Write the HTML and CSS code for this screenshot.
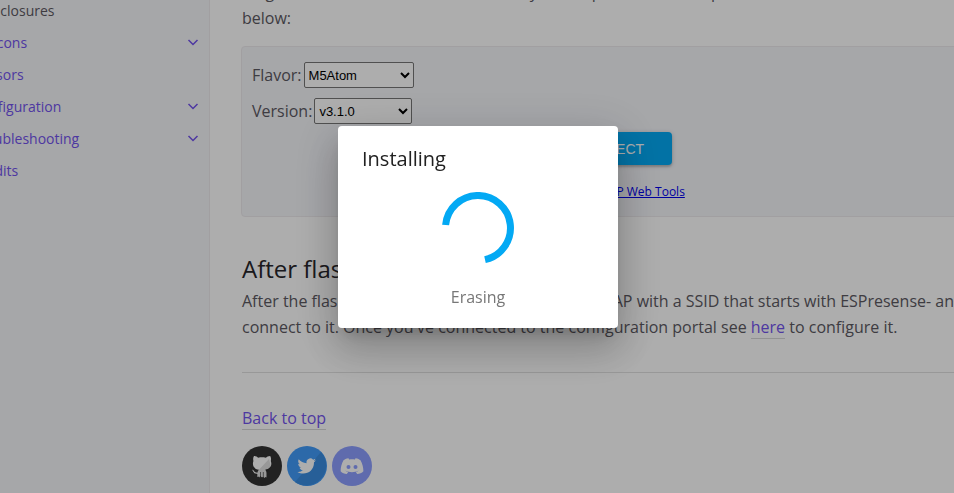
FILE: index.html
```
<!DOCTYPE html>
<html lang="en">
<head>
  <meta charset="UTF-8">
  <title>Install - ESPresense</title>
  <meta name="viewport" content="width=device-width, initial-scale=1.0">
  <link rel="stylesheet" href="styles.css">
</head>
<body>

  <div class="page">
    <nav class="sidebar">
      <ul class="nav-list">
        <li class="child"><a class="active" href="#enclosures">Enclosures</a></li>
        <li><a href="#beacons">Beacons</a>
          <svg class="chevron" viewBox="0 0 12 8"><path d="M1.500 1 6 5.500 10.500 1"/></svg></li>
        <li><a href="#sensors">Sensors</a></li>
        <li><a href="#configuration">Configuration</a>
          <svg class="chevron" viewBox="0 0 12 8"><path d="M1.500 1 6 5.500 10.500 1"/></svg></li>
        <li><a href="#troubleshooting">Troubleshooting</a>
          <svg class="chevron" viewBox="0 0 12 8"><path d="M1.500 1 6 5.500 10.500 1"/></svg></li>
        <li><a href="#credits">Credits</a></li>
      </ul>
    </nav>

    <main class="content" id="top">
      <p class="intro">Plug it in to USB, then select the flavor you can pick it and then press connect<br>below:</p>

      <form class="installer">
        <div class="field">
          <label for="flavor">Flavor:</label>
          <select id="flavor" class="flavor">
            <option>M5Atom</option>
          </select>
        </div>
        <div class="field">
          <label for="version">Version:</label>
          <select id="version" class="version">
            <option>v3.1.0</option>
          </select>
        </div>
        <div class="connect">
          <button type="button">CONNECT</button>
          <a href="#tools">Powered by ESP Web Tools</a>
        </div>
      </form>

      <h2>After flashing</h2>
      <p class="after">After the flash completes the board will create an AP with a SSID that starts with ESPresense- and<br>connect to it. Once you've connected to the configuration portal see <a href="#configuration">here</a> to configure it.</p>

      <hr>

      <footer>
        <a class="back" href="#top">Back to top</a>
        <div class="social">
          <a href="#github" aria-label="GitHub">
            <svg viewBox="0 0 40 40">
              <circle cx="20" cy="20" r="20" fill="#333"/>
              <path fill="#fff" d="M12 10c-1 2-1 3-.6 5-1.500 4.500.5 8 5.600 8.700-1 .8-1.300 1.800-1.400 2.800-2 .3-3-.5-3.600-1.500-.6-1-1.500-1.500-2-1.300 1.500 1.300 1.500 4.300 5.300 4.300v3l1-.5 1 1 1-1.500V26h.6v5.500l1-.8 1 .8V26h.6v5l1 1 1-1 1 .5V27c0-1-.4-2.500-1.300-3.300 5.200-.7 7.200-4.200 5.600-8.700.4-2 .4-3-.6-5-2 0-3.500 1-4.500 1.700-2.500-.6-5-.6-7.500 0C15.500 11 14 10 12 10z"/>
              <path fill="#000" opacity=".12" d="M27 13 13 28l4 4h8v-5l4-6z"/>
            </svg>
          </a>
          <a href="#twitter" aria-label="Twitter">
            <svg viewBox="0 0 40 40">
              <circle cx="20" cy="20" r="20" fill="#419bf9"/>
              <path fill="#3a8de0" d="M34 6A20 20 0 0 1 8 36z"/>
              <path fill="#fff" d="M29 14.300c-.7.300-1.400.5-2.200.6.8-.5 1.400-1.200 1.700-2.100-.7.4-1.600.8-2.400.9a3.800 3.800 0 0 0-6.500 3.500c-3.200-.2-6-1.700-7.900-4-1 1.800-.5 4 1.200 5.100-.6 0-1.200-.2-1.700-.5 0 1.900 1.300 3.500 3 3.800-.5.1-1.100.2-1.700.1.500 1.500 1.900 2.600 3.500 2.600a7.700 7.700 0 0 1-5.600 1.600c6.900 4.300 16.600.3 16.600-9.300v-.4c.8-.5 1.500-1.200 2-1.900z"/>
            </svg>
          </a>
          <a href="#discord" aria-label="Discord">
            <svg viewBox="0 0 40 40">
              <circle cx="20" cy="20" r="20" fill="#8c9eff"/>
              <path fill="#fff" d="M16.500 12.200c-2.300.3-4 1.200-5 2-1.800 3.200-2.900 7-2.900 11 1.600 1.800 3.800 2.700 6.200 2.800l1.400-1.900c-1.200-.3-2.200-.9-3-1.600 4.500 2.300 9.100 2.300 13.600 0-.8.7-1.800 1.300-3 1.600l1.400 1.900c2.400-.1 4.600-1 6.200-2.800 0-4-1.100-7.800-2.900-11-1-.8-2.700-1.700-5-2l-.6 1.200c-1.900-.3-3.900-.3-5.800 0z"/>
              <circle cx="16.500" cy="21" r="2" fill="#8c9eff"/>
              <circle cx="23.500" cy="21" r="2" fill="#8c9eff"/>
            </svg>
          </a>
        </div>
      </footer>
    </main>
  </div>

  <div class="scrim">
    <div class="dialog" role="dialog" aria-labelledby="dialogTitle">
      <h3 id="dialogTitle">Installing</h3>
      <svg class="spinner" viewBox="0 0 72 72"><path d="M3.600 33A32.500 32.500 0 1 1 43 67.700"/></svg>
      <p>Erasing</p>
    </div>
  </div>

</body>
</html>
```
FILE: styles.css
```
* {
  box-sizing: border-box;
}

body {
  margin: 0;
  overflow: hidden;
  font-family: "Open Sans", "Noto Sans", sans-serif;
  font-size: 16px;
  line-height: 26px;
  color: #5c5962;
  background: #fff;
}

a {
  color: #7253ed;
  text-decoration: none;
}

.page {
  display: flex;
  min-height: 100vh;
}

/* navigation */
.sidebar {
  flex: 0 0 270px;
  margin-left: -60px;
  background: #f5f6fa;
  border-right: 1px solid #eeebee;
}

.nav-list {
  list-style: none;
  margin: -5px 0 0;
  padding: 0 10px 0 32px;
  font-size: 14px;
  line-height: 32px;
}

.nav-list li {
  display: flex;
  align-items: center;
  justify-content: space-between;
}

.nav-list .child {
  padding-left: 12px;
}

.nav-list .active {
  color: #5c5962;
}

.chevron {
  width: 12px;
  height: 8px;
  fill: none;
  stroke: #7253ed;
  stroke-width: 1.5;
}

/* content */
.content {
  flex: 1;
  margin-right: -24px;
  padding-left: 32px;
  white-space: nowrap;
}

p {
  margin: 0;
}

.intro {
  margin: -21px 0 15px;
}

.installer {
  height: 171px;
  margin-left: -1px;
  padding: 10px;
  background: #f5f6fa;
  border: 1px solid #eeebee;
  border-radius: 4px;
}

.field {
  display: flex;
  align-items: center;
  gap: 2px;
  height: 36px;
}

select {
  height: 26px;
  border: 1px solid #767676;
  border-radius: 2px;
  background: #fff;
  color: #000;
  font-family: "Liberation Sans", sans-serif;
  font-size: 13px;
}

.flavor {
  width: 110px;
}

.version {
  width: 98px;
}

.connect {
  display: flex;
  flex-direction: column;
  align-items: center;
  gap: 14px;
  padding-top: 3px;
}

.connect button {
  height: 33px;
  padding: 0 28px;
  border: none;
  border-radius: 4px;
  background: #03a9f4;
  color: #fff;
  font-family: "Liberation Sans", sans-serif;
  font-size: 14px;
  box-shadow: 0 2px 2px rgba(0,0,0,0.14), 0 1px 5px rgba(0,0,0,0.2);
}

.connect a {
  color: #00e;
  font-size: 12px;
  text-decoration: underline;
}

h2 {
  margin: 34px 0 1px;
  font-size: 24px;
  font-weight: 400;
  line-height: 36px;
  color: #27262b;
}

.after a, .back {
  border-bottom: 1px solid #d8d8d8;
}

.after a {
  padding-bottom: 0;
}

hr {
  height: 1px;
  margin: 32px 0;
  border: none;
  background: #e1e1e1;
}

.back {
  display: inline-block;
  line-height: 22px;
}

.social {
  display: flex;
  gap: 5px;
  margin-top: 15px;
}

.social svg {
  display: block;
  width: 40px;
  height: 40px;
}

/* install dialog */
.scrim {
  position: fixed;
  inset: 0;
  display: flex;
  align-items: center;
  justify-content: center;
  padding: 0 0 40px 2px;
  background: rgba(0,0,0,0.32);
}

.dialog {
  display: flex;
  flex-direction: column;
  align-items: center;
  width: 280px;
  padding: 16px 24px 18px;
  background: #fff;
  border-radius: 4px;
  box-shadow: 0 11px 15px -7px rgba(0,0,0,0.2), 0 24px 38px 3px rgba(0,0,0,0.14), 0 9px 46px 8px rgba(0,0,0,0.12);
}

.dialog h3 {
  align-self: flex-start;
  margin: 0;
  font-size: 20px;
  font-weight: 400;
  line-height: 34px;
  color: #212121;
}

.spinner {
  width: 72px;
  height: 72px;
  margin: 16px 0 20px;
  fill: none;
  stroke: #03a9f4;
  stroke-width: 7;
}

.dialog p {
  color: #777;
}
```
